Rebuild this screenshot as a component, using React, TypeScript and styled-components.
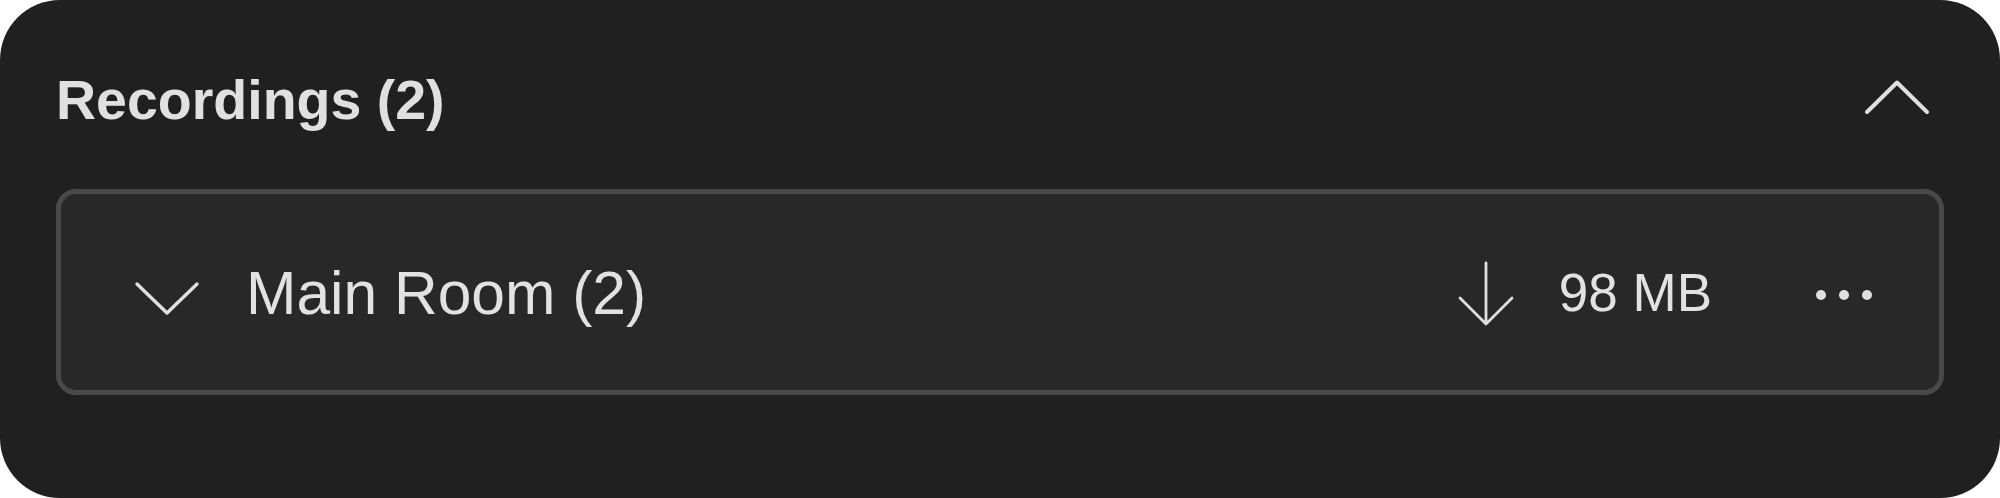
import styled, { createGlobalStyle } from "styled-components";

const GlobalStyle = createGlobalStyle`
  html, body {
    margin: 0;
    padding: 0;
    background: #ffffff;
  }
  * {
    box-sizing: border-box;
  }
`;

const Panel = styled.section`
  width: 2000px;
  height: 498px;
  background-color: #202020;
  border-radius: 60px;
  padding: 56px 56px 0 56px;
  font-family: "Liberation Sans", Arial, sans-serif;
  color: #e0e0e0;
`;

const Header = styled.header`
  height: 90px;
  display: flex;
  align-items: center;
  justify-content: space-between;
`;

const Title = styled.h2`
  margin: 0;
  font-size: 55.5px;
  font-weight: 700;
  line-height: 1;
  color: #e0e0e0;
`;

const ToggleButton = styled.button`
  background: none;
  border: none;
  padding: 0 14px 0 0;
  margin-bottom: 8px;
  display: flex;
  align-items: center;
  cursor: pointer;
  color: #e0e0e0;
`;

const RoomList = styled.div`
  margin-top: 43px;
  display: flex;
  flex-direction: column;
  gap: 16px;
`;

const RoomRow = styled.div`
  height: 206px;
  display: flex;
  align-items: center;
  background-color: #282828;
  border: 5px solid #494949;
  border-radius: 20px;
  padding: 0 67px 0 73px;
`;

const ExpandIcon = styled.span`
  display: flex;
  margin-top: 12px;
  margin-right: 46px;
  color: #e0e0e0;
`;

const RoomName = styled.span`
  font-size: 60.5px;
  line-height: 1;
  margin-top: 2px;
  color: #e2e2e2;
`;

const Actions = styled.div`
  margin-left: auto;
  display: flex;
  align-items: center;
`;

const DownloadIcon = styled.span`
  display: flex;
  margin-right: 45px;
  margin-top: 4px;
  color: #e0e0e0;
`;

const Size = styled.span`
  font-size: 53px;
  line-height: 1;
  color: #e2e2e2;
  margin-right: 104px;
`;

const MoreButton = styled.button`
  background: none;
  border: none;
  padding: 0;
  margin-top: 6px;
  display: flex;
  gap: 13px;
  cursor: pointer;
`;

const Dot = styled.span`
  width: 10px;
  height: 10px;
  border-radius: 50%;
  background-color: #e0e0e0;
`;

interface Room {
  id: string;
  name: string;
  count: number;
  size: string;
}

const rooms: Room[] = [{ id: "main", name: "Main Room", count: 2, size: "98 MB" }];

function ChevronUp() {
  return (
    <svg width="66" height="36" viewBox="0 0 66 36" fill="none">
      <polyline
        points="3,33 33,3.5 63,33"
        stroke="currentColor"
        strokeWidth="4"
        strokeLinecap="round"
        strokeLinejoin="round"
      />
    </svg>
  );
}

function ChevronDown() {
  return (
    <svg width="66" height="35" viewBox="0 0 66 35" fill="none">
      <polyline
        points="3,3 33,32 63,3"
        stroke="currentColor"
        strokeWidth="3.4"
        strokeLinecap="round"
        strokeLinejoin="round"
      />
    </svg>
  );
}

function ArrowDown() {
  return (
    <svg width="56" height="66" viewBox="0 0 56 66" fill="none">
      <path
        d="M28 2 V63 M2 37 L28 63 L54 37"
        stroke="currentColor"
        strokeWidth="2.8"
        strokeLinecap="round"
        strokeLinejoin="round"
      />
    </svg>
  );
}

function App() {
  return (
    <>
      <GlobalStyle />
      <Panel>
        <Header>
          <Title>Recordings ({rooms.reduce((n, r) => n + r.count, 0)})</Title>
          <ToggleButton aria-label="Collapse">
            <ChevronUp />
          </ToggleButton>
        </Header>
        <RoomList>
          {rooms.map(room => (
            <RoomRow key={room.id}>
              <ExpandIcon>
                <ChevronDown />
              </ExpandIcon>
              <RoomName>
                {room.name} ({room.count})
              </RoomName>
              <Actions>
                <DownloadIcon>
                  <ArrowDown />
                </DownloadIcon>
                <Size>{room.size}</Size>
                <MoreButton aria-label="More">
                  <Dot />
                  <Dot />
                  <Dot />
                </MoreButton>
              </Actions>
            </RoomRow>
          ))}
        </RoomList>
      </Panel>
    </>
  );
}

export default App;
